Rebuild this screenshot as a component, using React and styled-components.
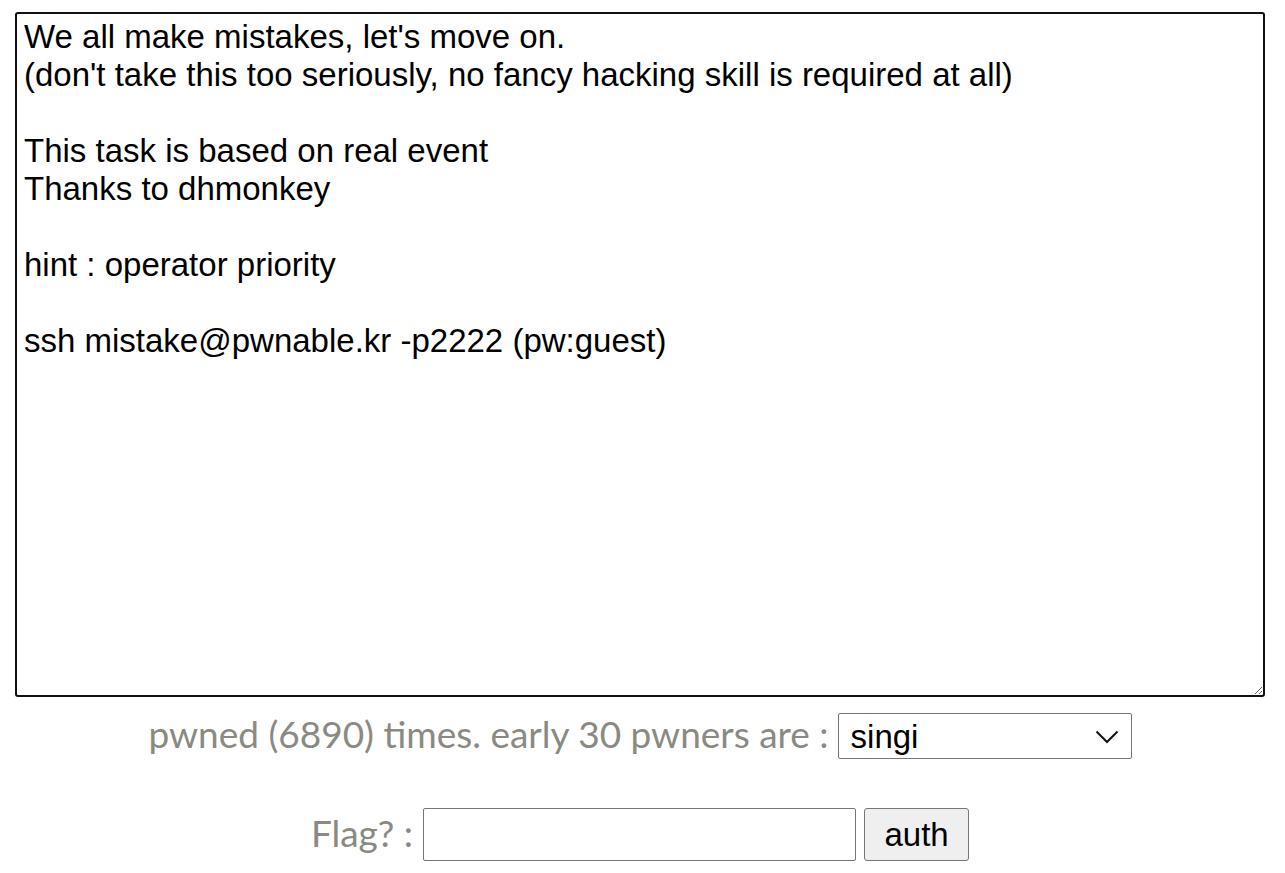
import React from 'react';
import styled, { createGlobalStyle } from 'styled-components';

const Global = createGlobalStyle`
  html, body {
    margin: 0;
    padding: 0;
    background: #fff;
  }
`;

const Page = styled.div`
  width: 1280px;
  padding-top: 12px;
  display: flex;
  flex-direction: column;
  align-items: center;
`;

const Description = styled.textarea`
  box-sizing: border-box;
  width: 1250px;
  height: 685px;
  margin: 0;
  padding: 4px 7px;
  border: 2px solid #111;
  border-radius: 3px;
  font-family: 'Liberation Sans', Arial, sans-serif;
  font-size: 33px;
  line-height: 38px;
  color: #000;
  background: #fff;
  outline: none;
`;

const Row = styled.div`
  display: flex;
  align-items: center;
  justify-content: center;
  margin-top: ${p => p.$top}px;
  gap: ${p => p.$gap || 9}px;
`;

const Label = styled.span`
  font-family: Lato, 'Open Sans', sans-serif;
  font-size: 37px;
  line-height: 40px;
  color: #8a8a82;
  white-space: nowrap;
  margin-bottom: 4px;
`;

const PickerWrap = styled.div`
  position: relative;
  width: 294px;
  height: 46px;
`;

const Picker = styled.select`
  box-sizing: border-box;
  appearance: none;
  -webkit-appearance: none;
  width: 100%;
  height: 100%;
  margin: 0;
  padding: 0 40px 0 12px;
  font-family: 'Liberation Sans', Arial, sans-serif;
  font-size: 33px;
  color: #000;
  background: #fff;
  border: 1px solid #767676;
  border-radius: 2px;
`;

const Chevron = styled.svg`
  position: absolute;
  right: 13px;
  top: 17px;
  pointer-events: none;
`;

const FlagInput = styled.input`
  box-sizing: border-box;
  width: 433px;
  height: 53px;
  margin: 0;
  border: 1px solid #767676;
  border-radius: 2px;
  font-family: 'Liberation Sans', Arial, sans-serif;
  font-size: 33px;
`;

const AuthButton = styled.button`
  box-sizing: border-box;
  width: 105px;
  height: 53px;
  margin: 0 0 0 -2px;
  padding: 0;
  background: #efefef;
  border: 1px solid #767676;
  border-radius: 3px;
  font-family: 'Liberation Sans', Arial, sans-serif;
  font-size: 33px;
  color: #000;
`;

const text = `We all make mistakes, let's move on.
(don't take this too seriously, no fancy hacking skill is required at all)

This task is based on real event
Thanks to dhmonkey

hint : operator priority

ssh mistake@pwnable.kr -p2222 (pw:guest)`;

const pwners = ['singi', 'cd80', 'rubiya', 'daehee', 'jinmo123'];

export default function App() {
  return (
    <>
      <Global />
      <Page>
        <Description readOnly defaultValue={text} />
        <Row $top={16}>
          <Label>pwned (6890) times. early 30 pwners are :</Label>
          <PickerWrap>
            <Picker defaultValue="singi">
              {pwners.map(n => <option key={n}>{n}</option>)}
            </Picker>
            <Chevron width="24" height="14" viewBox="0 0 24 14" fill="none">
              <path d="M1.5 1.5 L12 12 L22.5 1.5" stroke="#111" strokeWidth="2" />
            </Chevron>
          </PickerWrap>
        </Row>
        <Row $top={49} $gap={10}>
          <Label>Flag? :</Label>
          <FlagInput type="text" />
          <AuthButton>auth</AuthButton>
        </Row>
      </Page>
    </>
  );
}
